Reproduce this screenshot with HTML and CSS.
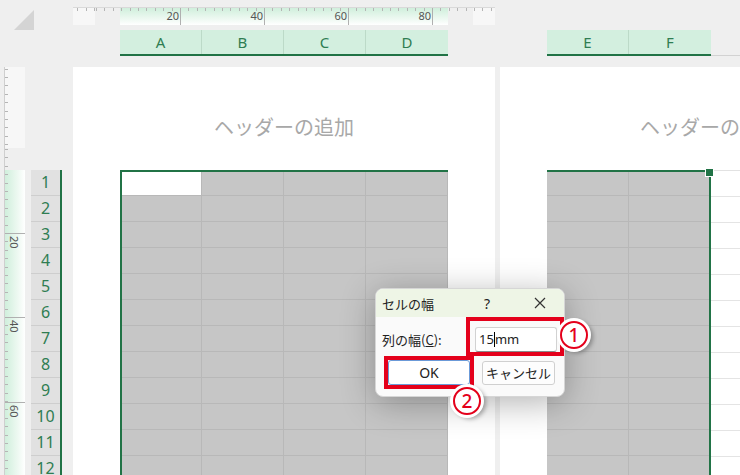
FILE: index.html
```html
<!DOCTYPE html>
<html lang="ja">
<head>
    <meta charset="UTF-8">
    <title>セルの幅</title>
    <link rel="stylesheet" href="styles.css">
</head>
<body>

<div class="sheet">
    <!-- 左上の全選択ボタン -->
    <div class="corner">
        <svg width="20" height="20" viewBox="0 0 20 20"><polygon points="20,0 20,20 0,20" fill="#d4d4d4"/></svg>
    </div>

    <!-- 上のルーラー -->
    <div class="hruler">
        <div class="rm"></div><div class="rgap"></div><div class="rsel"></div><div class="rgap"></div><div class="rm"></div>
        <div class="hmark h20"><span>20</span></div>
        <div class="hmark h40"><span>40</span></div>
        <div class="hmark h60"><span>60</span></div>
        <div class="hmark h80"><span>80</span></div>
    </div>

    <!-- 列見出し -->
    <div class="colhdr l"><div>A</div><div>B</div><div>C</div><div>D</div></div>
    <div class="colhdr r"><div>E</div><div>F</div></div>
    <div class="colrest"></div>

    <!-- 左のルーラー -->
    <div class="vruler">
        <div class="rm"></div><div class="rgap"></div><div class="rsel"></div>
        <div class="vmark v20"><span>20</span></div>
        <div class="vmark v40"><span>40</span></div>
        <div class="vmark v60"><span>60</span></div>
    </div>

    <!-- 行見出し -->
    <div class="rowhdr">
        <div>1</div><div>2</div><div>3</div><div>4</div><div>5</div><div>6</div>
        <div>7</div><div>8</div><div>9</div><div>10</div><div>11</div><div>12</div>
    </div>

    <!-- 1ページ目 -->
    <div class="page l">
        <div class="head">ヘッダーの追加</div>
        <div class="cells four">
            <div class="active"></div><div></div><div></div><div></div>
            <div></div><div></div><div></div><div></div>
            <div></div><div></div><div></div><div></div>
            <div></div><div></div><div></div><div></div>
            <div></div><div></div><div></div><div></div>
            <div></div><div></div><div></div><div></div>
            <div></div><div></div><div></div><div></div>
            <div></div><div></div><div></div><div></div>
            <div></div><div></div><div></div><div></div>
            <div></div><div></div><div></div><div></div>
            <div></div><div></div><div></div><div></div>
            <div></div><div></div><div></div><div></div>
        </div>
    </div>

    <!-- 2ページ目 -->
    <div class="page r">
        <div class="head">ヘッダーの追加</div>
        <div class="body-row">
            <div class="cells two">
                <div></div><div></div><div></div><div></div><div></div><div></div>
                <div></div><div></div><div></div><div></div><div></div><div></div>
                <div></div><div></div><div></div><div></div><div></div><div></div>
                <div></div><div></div><div></div><div></div><div></div><div></div>
            </div>
            <div class="blank"></div>
        </div>
    </div>

    <!-- ダイアログ -->
    <div class="dialog">
        <div class="dlg-title">
            <span class="dlg-name">セルの幅</span>
            <span class="dlg-help">?</span>
            <span class="dlg-close">
                <svg width="12" height="12" viewBox="0 0 12 12"><path d="M1 1L11 11M11 1L1 11" stroke="#333" stroke-width="1.2"/></svg>
            </span>
        </div>
        <div class="dlg-row">
            <span class="dlg-label">列の幅(<u>C</u>):</span>
            <div class="dlg-input">15<i class="caret"></i>mm</div>
        </div>
        <div class="dlg-row btns">
            <button class="btn ok">OK</button>
            <button class="btn cancel">キャンセル</button>
        </div>
    </div>

    <!-- 赤枠と番号 -->
    <div class="mark m1"></div>
    <div class="mark m2"></div>
    <div class="num n1">1</div>
    <div class="num n2">2</div>
</div>

</body>
</html>
```

FILE: styles.css
```css
* {
    box-sizing: border-box;
}
body {
    margin: 0;
    background-color: #efefef;
    font-family: "Noto Sans", "Noto Sans CJK JP", sans-serif;
    overflow: hidden;
}
.sheet {
    position: relative;
    display: grid;
    grid-template-columns: 4px 21px 6px 31px 11px 47px 328px 47px 5px 47px 164px 29px;
    grid-template-rows: 7px 18px 5px 26px 11px 103px 305px;
    width: 740px;
    height: 475px;
    overflow: hidden;
}
.corner {
    grid-column: 1 / 5;
    grid-row: 1 / 5;
    padding: 10px 0 0 14px;
}

/* ルーラー */
.hruler {
    grid-column: 6 / 9;
    grid-row: 2;
    position: relative;
    display: flex;
    border-top: 1px solid #d9d9d9;
}
.hruler .rm {
    width: 22px;
    background-color: #f7f7f7;
}
.hruler .rgap {
    width: 25px;
}
.hruler .rsel {
    width: 328px;
    background: linear-gradient(#d0efdc, #eef9f2 65%, #fff);
}
.hruler::before {
    content: "";
    position: absolute;
    left: 0;
    right: 0;
    top: 0;
    height: 3px;
    background: repeating-linear-gradient(to right, #b5b5b5 0 1px, transparent 1px 8.4px);
    background-position: 23px 0;
}
.hmark {
    position: absolute;
    top: 0;
    bottom: 0;
    border-left: 1px solid #b0b0b0;
}
.hmark span {
    position: absolute;
    right: 2px;
    top: 1px;
    font-size: 11px;
    line-height: 14px;
    color: #555;
}
.h20 { left: 107px; }
.h40 { left: 191px; }
.h60 { left: 275px; }
.h80 { left: 359px; }

.vruler {
    grid-column: 2;
    grid-row: 6 / 8;
    position: relative;
    display: flex;
    flex-direction: column;
    border-left: 1px solid #cfcfcf;
}
.vruler .rm {
    height: 81px;
    background-color: #f7f7f7;
}
.vruler .rgap {
    height: 22px;
}
.vruler .rsel {
    flex: 1;
    background: linear-gradient(to right, #d0efdc, #eef9f2 65%, #fff);
}
.vruler::before {
    content: "";
    position: absolute;
    left: 0;
    top: 0;
    bottom: 0;
    width: 3px;
    background: repeating-linear-gradient(#b5b5b5 0 1px, transparent 1px 8.4px);
    background-position: 0 82px;
}
.vmark {
    position: absolute;
    left: 0;
    right: 0;
    border-top: 1px solid #b0b0b0;
}
.vmark span {
    position: absolute;
    left: 2px;
    top: 2px;
    writing-mode: vertical-rl;
    font-size: 11px;
    line-height: 14px;
    color: #555;
}
.v20 { top: 166px; }
.v40 { top: 250px; }
.v60 { top: 335px; }

/* 見出し */
.colhdr {
    display: flex;
    background-color: #d3efdf;
    border-bottom: 2px solid #217346;
}
.colhdr.l {
    grid-column: 7;
    grid-row: 4;
}
.colhdr.r {
    grid-column: 11;
    grid-row: 4;
}
.colhdr div {
    width: 82px;
    border-right: 1px solid #bcdac8;
    text-align: center;
    font-size: 15px;
    line-height: 25px;
    color: #2f7d52;
}
.colhdr div:last-child {
    border-right: none;
}
.colrest {
    grid-column: 12;
    grid-row: 4;
    border-bottom: 1px solid #d2d2d2;
}
.rowhdr {
    grid-column: 4;
    grid-row: 7;
    border-right: 2px solid #217346;
    overflow: hidden;
}
.rowhdr div {
    height: 26px;
    background-color: #e1e1e1;
    border-bottom: 1px solid #cecece;
    text-align: center;
    font-size: 16px;
    line-height: 25px;
    color: #2f7d52;
}

/* ページ */
.page {
    grid-row: 6 / 8;
    background-color: #fff;
    overflow: hidden;
}
.page.l {
    grid-column: 6 / 9;
}
.page.r {
    grid-column: 10 / 13;
}
.head {
    height: 103px;
    padding-top: 46px;
    font-family: "Noto Sans CJK JP", sans-serif;
    font-size: 20px;
    line-height: 28px;
    color: #a8a8a8;
    white-space: nowrap;
}
.page.l .head {
    text-align: center;
}
.page.r .head {
    padding-left: 140px;
}
.cells {
    position: relative;
    display: grid;
    grid-auto-rows: 26px;
    margin-left: 47px;
}
.cells.four {
    grid-template-columns: repeat(4, 82px);
    width: 328px;
}
.cells.two {
    grid-template-columns: repeat(2, 82px);
    width: 164px;
    margin-left: 0;
}
.cells div {
    background-color: #c6c6c6;
    border-right: 1px solid #b8b8b8;
    border-bottom: 1px solid #b8b8b8;
}
.cells .active {
    background-color: #fff;
}
.cells.four::after {
    content: "";
    position: absolute;
    inset: 0;
    border-top: 2px solid #217346;
    border-left: 2px solid #217346;
}
.cells.two::after {
    content: "";
    position: absolute;
    inset: 0;
    border-top: 2px solid #217346;
    border-right: 2px solid #217346;
}
.cells.two::before {
    content: "";
    position: absolute;
    right: -3px;
    top: -2px;
    width: 7px;
    height: 7px;
    background-color: #217346;
    border: 1px solid #fff;
    z-index: 1;
}
.body-row {
    display: flex;
    margin-left: 47px;
}
.blank {
    flex: 1;
    height: 305px;
    border-top: 1px solid #e2e2e2;
    background: repeating-linear-gradient(transparent 0 25px, #e4e4e4 25px 26px);
}

/* ダイアログ */
.dialog {
    position: absolute;
    left: 375px;
    top: 288px;
    width: 190px;
    height: 109px;
    background-color: #fafafa;
    border: 1px solid #d6d6d6;
    border-radius: 8px;
    overflow: hidden;
    box-shadow: 0 6px 34px rgba(0, 0, 0, 0.3);
    font-family: "Noto Sans CJK JP", sans-serif;
    font-size: 13px;
    color: #222;
}
.dlg-title {
    display: flex;
    align-items: center;
    height: 28px;
    padding-left: 6px;
    background-color: #eef5e6;
}
.dlg-name {
    width: 93px;
}
.dlg-help {
    width: 24px;
    text-align: center;
    font-family: "Noto Sans", sans-serif;
    font-size: 14px;
}
.dlg-close {
    display: flex;
    justify-content: center;
    width: 30px;
    margin-left: 26px;
}
.dlg-row {
    display: flex;
    align-items: center;
    margin-top: 10px;
    padding: 0 7px 0 6px;
}
.dlg-label {
    flex: 1;
}
.dlg-input {
    width: 82px;
    height: 25px;
    padding-left: 3px;
    background-color: #fff;
    border: 1px solid #d2d2d2;
    border-bottom-color: #8a8a8a;
    border-radius: 3px;
    font-family: "Noto Sans", sans-serif;
    line-height: 23px;
}
.caret {
    display: inline-block;
    width: 1px;
    height: 15px;
    margin: 0 0 -3px;
    background-color: #000;
}
.dlg-row.btns {
    margin-top: 8px;
    padding-left: 12px;
}
.btn {
    height: 25px;
    padding: 0;
    background-color: #fdfdfd;
    border: 1px solid #d0d0d0;
    border-radius: 3px;
    font-family: "Noto Sans", "Noto Sans CJK JP", sans-serif;
    font-size: 13px;
    color: #222;
}
.btn.ok {
    width: 82px;
    background-color: #fff;
    border-color: #6b9ad8;
    font-size: 14px;
}
.btn.cancel {
    width: 73px;
    height: 24px;
    margin-left: 12px;
}

/* 赤枠・番号 */
.mark {
    position: absolute;
    border: 4px solid #e4001b;
}
.m1 {
    left: 466px;
    top: 317px;
    width: 98px;
    height: 39px;
}
.m2 {
    left: 384px;
    top: 356px;
    width: 90px;
    height: 33px;
}
.num {
    position: absolute;
    width: 28px;
    height: 28px;
    border: 2px solid #e4001b;
    border-radius: 50%;
    background-color: #fff;
    box-shadow: 0 0 0 3px #fff, 3px 2px 4px 2px rgba(0, 0, 0, 0.3);
    text-align: center;
    font-family: "Noto Sans", sans-serif;
    font-size: 19px;
    font-weight: 500;
    line-height: 24px;
    color: #e4001b;
}
.n1 {
    left: 560px;
    top: 321px;
}
.n2 {
    left: 453px;
    top: 387px;
}
```
